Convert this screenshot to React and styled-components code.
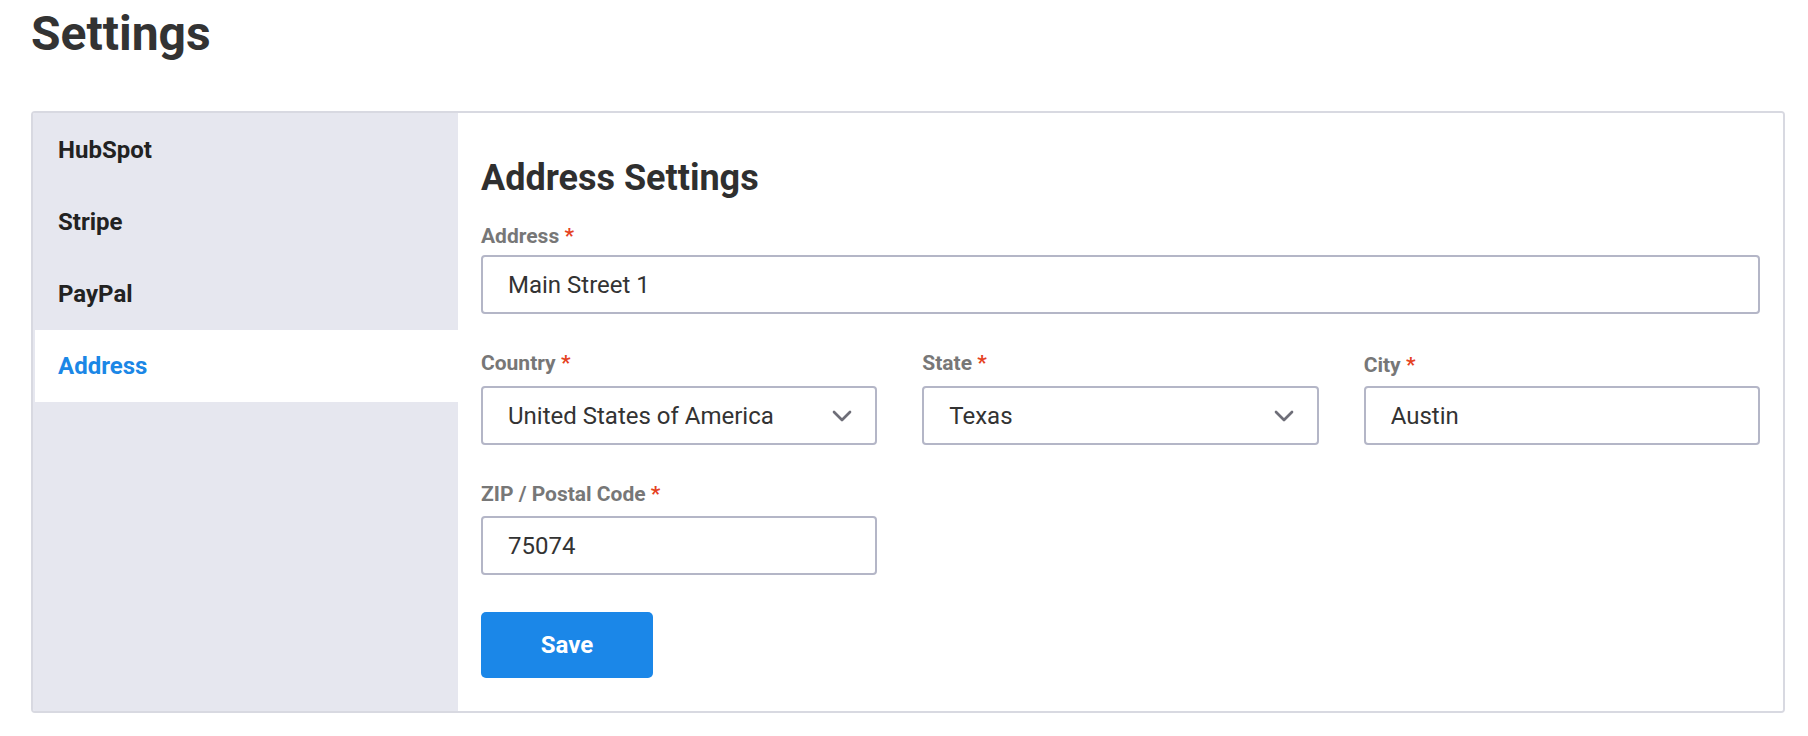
// Node module Imports
import { useState } from "react";
import styled, { createGlobalStyle } from "styled-components";
import { ChevronDown } from "lucide-react";

const GlobalStyle = createGlobalStyle`
  * {
    box-sizing: border-box;
  }

  body {
    margin: 0;
    background: #fff;
    font-family: Roboto, "Liberation Sans", Arial, sans-serif;
    color: #333;
  }
`;

const Page_sc = styled.div`
  padding: 6px 23px 22px 31px;
`;

const Title_sc = styled.h1`
  margin: 0 0 49px;
  font-size: 48px;
  line-height: 56px;
  font-weight: 700;
  color: #333;
`;

const Panel_sc = styled.div`
  display: flex;
  min-height: 602px;
  border: 2px solid #d8d9e1;
  border-radius: 4px;
  overflow: hidden;
`;

const Sidebar_sc = styled.nav`
  width: 425px;
  flex-shrink: 0;
  padding: 1px 0 0 2px;
  background: #e6e7ef;
  display: flex;
  flex-direction: column;
`;

const NavItem_sc = styled.div`
  height: 72px;
  display: flex;
  align-items: center;
  padding-left: 23px;
  font-size: 24px;
  font-weight: 700;
  color: ${({ $active }) => ($active ? "#1b87e6" : "#222")};
  background: ${({ $active }) => ($active ? "#fff" : "transparent")};
  cursor: pointer;
`;

const Content_sc = styled.section`
  flex: 1 1 0;
  padding: 44px 23px 30px;
  background: #fff;
`;

const Heading_sc = styled.h2`
  margin: 0 0 25px;
  font-size: 36px;
  line-height: 42px;
  font-weight: 700;
  color: #2f2f2f;
`;

const Form_sc = styled.form`
  display: flex;
  flex-direction: column;
  gap: 37px;
`;

const Grid_sc = styled.div`
  display: grid;
  grid-template-columns: repeat(3, 1fr);
  column-gap: 45px;
  align-items: end;
`;

const Field_sc = styled.label`
  display: flex;
  flex-direction: column;
  gap: ${({ $gap }) => $gap || 9}px;
`;

const Label_sc = styled.span`
  font-size: 21px;
  line-height: 25px;
  font-weight: 700;
  color: #777;

  em {
    font-style: normal;
    color: #e5421f;
  }
`;

const Input_sc = styled.input`
  width: 100%;
  height: 59px;
  padding: 0 25px;
  border: 2px solid #b4b6c7;
  border-radius: 4px;
  background: #fff;
  font-family: inherit;
  font-size: 24px;
  color: #333;
  outline: none;
`;

const SelectWrap_sc = styled.div`
  position: relative;

  select {
    width: 100%;
    height: 59px;
    padding: 0 60px 0 25px;
    border: 2px solid #b4b6c7;
    border-radius: 4px;
    background: #fff;
    font-family: inherit;
    font-size: 24px;
    color: #333;
    appearance: none;
    outline: none;
  }

  svg {
    position: absolute;
    top: 50%;
    right: 19px;
    transform: translateY(-50%);
    pointer-events: none;
  }
`;

const SaveButton_sc = styled.button`
  width: 172px;
  height: 66px;
  border: none;
  border-radius: 5px;
  background: #1b87e8;
  font-family: inherit;
  font-size: 24px;
  font-weight: 700;
  color: #fff;
  cursor: pointer;
`;

const NAV_ITEMS = ["HubSpot", "Stripe", "PayPal", "Address"];

function Field({ label, gap, children }) {
  return (
    <Field_sc $gap={gap}>
      <Label_sc>
        {label} <em>*</em>
      </Label_sc>
      {children}
    </Field_sc>
  );
}

function Select({ value, options }) {
  return (
    <SelectWrap_sc>
      <select defaultValue={value}>
        {options.map((o) => (
          <option key={o}>{o}</option>
        ))}
      </select>
      <ChevronDown size={32} color="#6e6e78" strokeWidth={2} />
    </SelectWrap_sc>
  );
}

export default function App() {
  const [active, setActive] = useState("Address");

  return (
    <>
      <GlobalStyle />
      <Page_sc>
        <Title_sc>Settings</Title_sc>

        <Panel_sc>
          <Sidebar_sc>
            {NAV_ITEMS.map((item) => (
              <NavItem_sc
                key={item}
                $active={item === active}
                onClick={() => setActive(item)}
              >
                {item}
              </NavItem_sc>
            ))}
          </Sidebar_sc>

          <Content_sc>
            <Heading_sc>Address Settings</Heading_sc>

            <Form_sc onSubmit={(e) => e.preventDefault()}>
              <Field label="Address" gap={6}>
                <Input_sc defaultValue="Main Street 1" />
              </Field>

              <Grid_sc>
                <Field label="Country" gap={10}>
                  <Select
                    value="United States of America"
                    options={["United States of America", "Canada", "Mexico"]}
                  />
                </Field>
                <Field label="State" gap={10}>
                  <Select
                    value="Texas"
                    options={["Texas", "California", "New York"]}
                  />
                </Field>
                <Field label="City" gap={8}>
                  <Input_sc defaultValue="Austin" />
                </Field>
              </Grid_sc>

              <Grid_sc>
                <Field label="ZIP / Postal Code">
                  <Input_sc defaultValue="75074" />
                </Field>
              </Grid_sc>

              <div>
                <SaveButton_sc type="submit">Save</SaveButton_sc>
              </div>
            </Form_sc>
          </Content_sc>
        </Panel_sc>
      </Page_sc>
    </>
  );
}
